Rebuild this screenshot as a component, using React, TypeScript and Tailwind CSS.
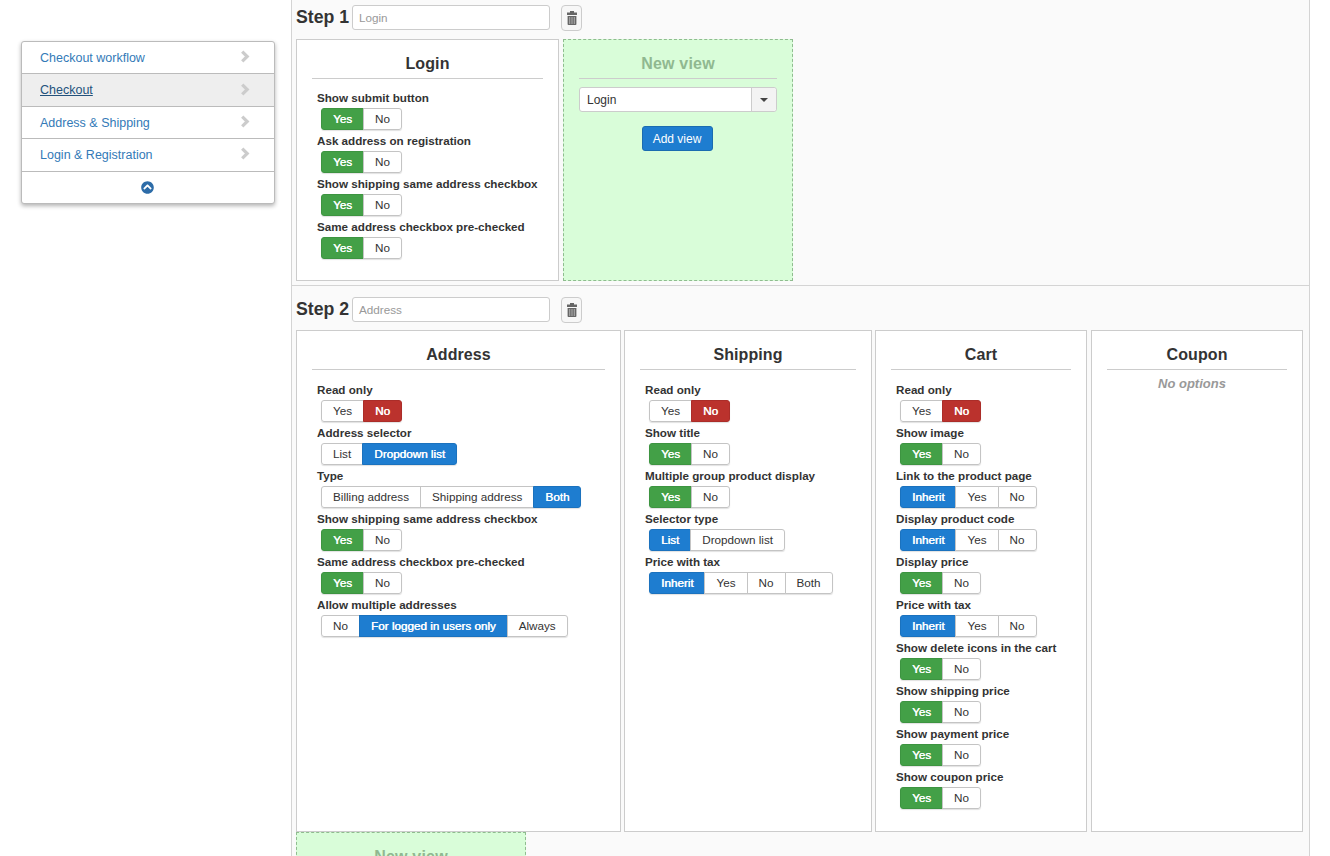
import React from 'react';
import { FaChevronCircleUp } from 'react-icons/fa';

type Tone = 'green' | 'red' | 'blue';
type Opt = { label: string; options: string[]; active: number; tone: Tone };

const toneClass: Record<Tone, string> = {
  green: 'bg-[#43a047] border-[#3d9441] text-white [text-shadow:0.4px_0_0_#fff]',
  red: 'bg-[#bb322d] border-[#ab2d29] text-white [text-shadow:0.4px_0_0_#fff]',
  blue: 'bg-[#1e7dd0] border-[#1b72be] text-white [text-shadow:0.4px_0_0_#fff]',
};

const yn = (label: string): Opt => ({ label, options: ['Yes', 'No'], active: 0, tone: 'green' });
const readOnly: Opt = { label: 'Read only', options: ['Yes', 'No'], active: 1, tone: 'red' };
const inherit = (label: string): Opt => ({ label, options: ['Inherit', 'Yes', 'No'], active: 0, tone: 'blue' });

const loginOpts = [
  yn('Show submit button'),
  yn('Ask address on registration'),
  yn('Show shipping same address checkbox'),
  yn('Same address checkbox pre-checked'),
];

const addressOpts: Opt[] = [
  readOnly,
  { label: 'Address selector', options: ['List', 'Dropdown list'], active: 1, tone: 'blue' },
  { label: 'Type', options: ['Billing address', 'Shipping address', 'Both'], active: 2, tone: 'blue' },
  yn('Show shipping same address checkbox'),
  yn('Same address checkbox pre-checked'),
  { label: 'Allow multiple addresses', options: ['No', 'For logged in users only', 'Always'], active: 1, tone: 'blue' },
];

const shippingOpts: Opt[] = [
  readOnly,
  yn('Show title'),
  yn('Multiple group product display'),
  { label: 'Selector type', options: ['List', 'Dropdown list'], active: 0, tone: 'blue' },
  { label: 'Price with tax', options: ['Inherit', 'Yes', 'No', 'Both'], active: 0, tone: 'blue' },
];

const cartOpts: Opt[] = [
  readOnly,
  yn('Show image'),
  inherit('Link to the product page'),
  inherit('Display product code'),
  yn('Display price'),
  inherit('Price with tax'),
  yn('Show delete icons in the cart'),
  yn('Show shipping price'),
  yn('Show payment price'),
  yn('Show coupon price'),
];

const menu = ['Checkout workflow', 'Checkout', 'Address & Shipping', 'Login & Registration'];

const TrashIcon = () => (
  <svg width="10" height="14" viewBox="0 0 10 14" fill="#666">
    <path d="M3 0h4v1.5h3V4H0V1.5h3z" />
    <path d="M.6 5h8.8v8.2a.8.8 0 0 1-.8.8H1.4a.8.8 0 0 1-.8-.8z" />
    <path d="M2 6h1.3v7H2zM4.35 6h1.3v7h-1.3zM6.7 6H8v7H6.7z" fill="#a0a0a0" />
  </svg>
);

const ChevronIcon = () => (
  <svg width="10" height="13" viewBox="0 0 10 13" fill="none" className="mb-[2px]">
    <path d="M2.2 1.6 L7.2 6.5 L2.2 11.4" stroke="#ccc" strokeWidth="3.2" />
  </svg>
);

const ButtonGroup = ({ opt }: { opt: Opt }) => (
  <div className="flex h-[22px] w-fit ml-[4px] rounded-[3px] shadow-[0_1px_1px_rgba(0,0,0,0.12)]">
    {opt.options.map((o, i) => (
      <div
        key={o}
        className={`flex items-center justify-center px-[11px] border text-[11.7px] leading-none whitespace-nowrap ${
          i > 0 ? '-ml-px' : ''
        } ${i === 0 ? 'rounded-l-[3px]' : ''} ${i === opt.options.length - 1 ? 'rounded-r-[3px]' : ''} ${
          i === opt.active ? toneClass[opt.tone] : 'bg-white border-[#c4c4c4] text-[#333]'
        }`}
      >
        {o}
      </div>
    ))}
  </div>
);

const Option = ({ opt }: { opt: Opt }) => (
  <div className="h-[43px]">
    <div className="h-[21px] pt-[2px] text-[11.65px] leading-[17px] font-bold text-[#333] whitespace-nowrap">{opt.label}</div>
    <ButtonGroup opt={opt} />
  </div>
);

const Card = ({ title, opts, className }: { title: string; opts?: Opt[]; className: string }) => (
  <div className={`border border-[#ccc] bg-white px-[15px] shrink-0 ${className}`}>
    <h3 className="h-[39px] pt-[14px] text-center text-[16px] leading-[20px] font-bold text-[#333] border-b border-[#ccc] [letter-spacing:0.1px]">
      {title}
    </h3>
    {opts ? (
      <div className="pl-[5px]">
        {opts.map((o) => (
          <Option key={o.label} opt={o} />
        ))}
      </div>
    ) : (
      <div className="pt-[5px] pr-[10px] text-center text-[13px] leading-[17px] italic font-bold text-[#999]">No options</div>
    )}
  </div>
);

const NewView = () => (
  <div className="w-[230px] h-[242px] shrink-0 border border-dashed border-[#8fbc8f] bg-[#d9fdd9] px-[15px]">
    <h3 className="h-[39px] pt-[14px] text-center text-[16px] leading-[20px] font-bold text-[#90b890] border-b border-[#ccc] [letter-spacing:0.2px]">
      New view
    </h3>
    <div className="flex h-[25px] mt-[8px] rounded-[3px] border border-[#ccc] bg-white">
      <div className="flex-1 pl-[7px] text-[12px] leading-[25px] text-[#333]">Login</div>
      <div className="flex w-[25px] items-center justify-center rounded-r-[3px] border-l border-[#ccc] bg-[#f3f3f3]">
        <div className="border-x-[4px] border-t-[4px] border-x-transparent border-t-[#444]" />
      </div>
    </div>
    <div className="mt-[14px] flex justify-center pr-[2px]">
      <div className="flex h-[25px] w-[71px] items-center justify-center rounded-[3px] border border-[#1b6cb0] bg-[#1e7dd0] text-[12px] text-white">
        Add view
      </div>
    </div>
  </div>
);

const StepHeader = ({ n, placeholder }: { n: number; placeholder: string }) => (
  <div className="flex items-center h-[25px] gap-[3px]">
    <span className="w-[53px] text-[17.7px] leading-[25px] font-bold text-[#333] whitespace-nowrap">Step {n}</span>
    <div className="w-[198px] h-[25px] rounded-[3px] border border-[#ccc] bg-white pl-[6px] text-[11.7px] leading-[23px] text-[#999]">
      {placeholder}
    </div>
    <div className="ml-[8px] flex h-[26px] w-[21px] items-center justify-center rounded-[4px] border border-[#ccc] bg-[#f7f7f7]">
      <TrashIcon />
    </div>
  </div>
);

export default function App() {
  return (
    <div className="flex h-screen overflow-hidden bg-white [font-family:'Liberation_Sans',Arial,sans-serif]">
      <aside className="w-[291px] shrink-0 pl-[21px] pt-[41px]">
        <div className="w-[254px] rounded-[3px] border border-[#bbb] bg-white shadow-[0_2px_4px_rgba(0,0,0,0.3)]">
          {menu.map((m, i) => (
            <div
              key={m}
              className={`flex h-[32.4px] items-center justify-between border-b border-[#bbb] pl-[18px] pr-[24px] text-[12.5px] ${
                i === 1 ? 'bg-[#eee] text-[#23527c]' : 'text-[#337ab7]'
              }`}
            >
              <span className={`pt-[1px] ${i === 1 ? 'underline' : ''}`}>{m}</span>
              <ChevronIcon />
            </div>
          ))}
          <div className="flex h-[31px] items-center justify-center pr-[2px]">
            <FaChevronCircleUp className="text-[#2d6ca8]" size={13} />
          </div>
        </div>
      </aside>
      <main className="w-[1019px] shrink-0 border-x border-[#d4d4d4] bg-[#fafafa]">
        <section className="h-[286px] border-b border-[#d4d4d4] pl-[4px] pt-[5px]">
          <StepHeader n={1} placeholder="Login" />
          <div className="mt-[9px] flex gap-[4px]">
            <Card title="Login" opts={loginOpts} className="w-[263px] h-[242px] [&>div]:pt-[8px]" />
            <NewView />
          </div>
        </section>
        <section className="pl-[4px] pt-[11px]">
          <StepHeader n={2} placeholder="Address" />
          <div className="mt-[8px] flex gap-[3px]">
            <Card title="Address" opts={addressOpts} className="w-[325px] h-[502px] [&>div]:pt-[9px]" />
            <Card title="Shipping" opts={shippingOpts} className="w-[248px] h-[502px] [&>div]:pt-[9px]" />
            <Card title="Cart" opts={cartOpts} className="w-[212px] h-[502px] [&>div]:pt-[9px]" />
            <Card title="Coupon" className="ml-[1px] w-[212px] h-[502px]" />
          </div>
          <NewView />
        </section>
      </main>
    </div>
  );
}
